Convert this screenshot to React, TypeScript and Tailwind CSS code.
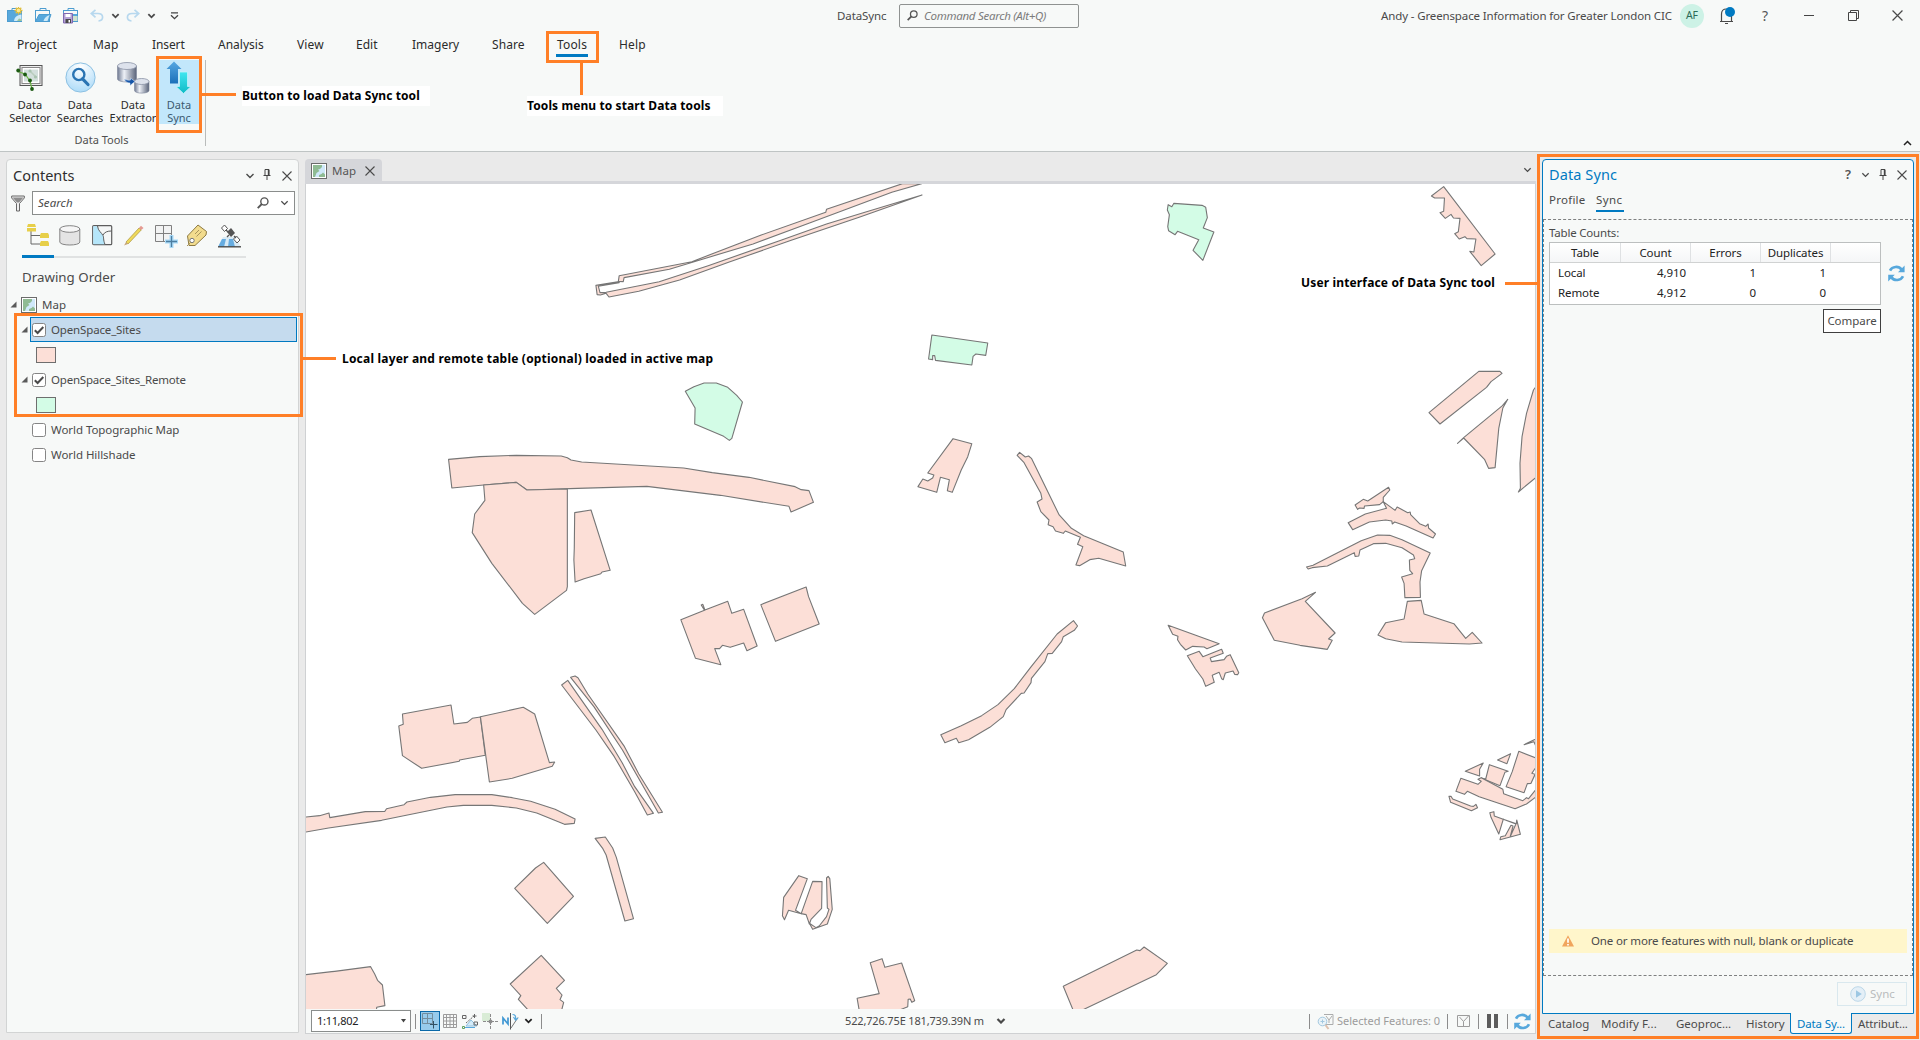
import React from "react";

const FONT = "font-['Noto_Sans','Open_Sans',sans-serif]";

/* ---------- small glyphs ---------- */

function Chevron({ className = "", color = "#4a4a4a", w = 10, sw = 1.4 }: { className?: string; color?: string; w?: number; sw?: number }) {
  return (
    <svg className={`shrink-0 ${className}`} width={w} height={6} viewBox="0 0 10 6" fill="none" stroke={color} strokeWidth={sw}>
      <path d="M1.5 1 5 4.5 8.5 1" />
    </svg>
  );
}

function Cross({ className = "", size = 10 }: { className?: string; size?: number }) {
  return (
    <svg className={`shrink-0 ${className}`} width={size} height={size} viewBox="0 0 10 10" stroke="#4a4a4a" strokeWidth="1.1">
      <path d="M.5.5 9.5 9.5M9.5.5.5 9.5" />
    </svg>
  );
}

function Pin({ className = "" }: { className?: string }) {
  return (
    <svg className={`shrink-0 ${className}`} width="8" height="11" viewBox="0 0 8 11" fill="none" stroke="#444">
      <path d="M2 6V.5h4V6M.5 6.5h7M4 7v4" />
      <path d="M5.5 1v5" strokeWidth="1.4" />
    </svg>
  );
}

function Magnifier({ className = "", size = 13, color = "#555" }: { className?: string; size?: number; color?: string }) {
  return (
    <svg className={`shrink-0 ${className}`} width={size} height={size} viewBox="0 0 13 13" fill="none" stroke={color}>
      <circle cx="8" cy="4.8" r="3.9" strokeWidth="1.5" />
      <path d="M5.2 7.6.8 12" strokeWidth="2" />
    </svg>
  );
}

function Refresh({ className = "" }: { className?: string }) {
  return (
    <svg className={`shrink-0 ${className}`} width="17" height="17" viewBox="0 0 17 17" fill="none" stroke="#57a8dc" strokeWidth="2.6">
      <path d="M2 5.6C4.2 1.2 10.6.6 13.6 4.6" />
      <path d="M15 11.2C12.8 15.8 6.4 16.4 3.4 12.4" />
      <path d="M16.6.6v6.6H10zM.2 16.4V9.8h6.6z" fill="#57a8dc" stroke="none" />
    </svg>
  );
}

function MapIcon({ className = "" }: { className?: string }) {
  return (
    <svg className={`shrink-0 ${className}`} width="16" height="16" viewBox="0 0 16 16">
      <rect x=".5" y=".5" width="15" height="15" fill="#fff" stroke="#6b6b6b" />
      <rect x="2" y="2" width="12" height="12" fill="#cfe8fa" />
      <path d="M2 2h9v2L9 6 7 6.500 8.500 8 5.500 10 4 14H2z" fill="#8fbb93" />
      <path d="M8 14v-2l2.500-1 1.500-1.500 2 2V14z" fill="#8fbb93" />
    </svg>
  );
}

function Expander({ className = "" }: { className?: string }) {
  return (
    <svg className={`shrink-0 ${className}`} width="7" height="7" viewBox="0 0 7 7">
      <path d="M6.500.5v6H.5z" fill="#5a5a5a" />
    </svg>
  );
}

function Check({ on }: { on?: boolean }) {
  return (
    <svg className="shrink-0" width="14" height="14" viewBox="0 0 14 14">
      <rect x=".5" y=".5" width="13" height="13" rx="2" fill="#fff" stroke="#858585" />
      {on && <path d="M2.800 7.200 5.600 10 11.300 4" fill="none" stroke="#4a4a4a" strokeWidth="2" />}
    </svg>
  );
}

/* ---------- title bar ---------- */

function Briefcase({ variant }: { variant: "new" | "open" | "save" }) {
  return (
    <svg className="shrink-0" width="17" height="17" viewBox="0 0 17 17">
      <path d="M5 4V1.500h6V4" fill="none" stroke="#4d9dd0" />
      <rect x=".5" y="3.500" width="14" height="11" fill={variant === "open" ? "#f7f9f8" : "#57a8dc"} stroke="#4d9dd0" />
      {variant === "open" && (
        <>
          <path d="M.5 14.500 4 7.500h12l-2.500 7z" fill="#57a8dc" stroke="#4d9dd0" />
          <path d="M8.500 14c.5-2 2-4.500 6-6l-2 6z" fill="#cfeaf8" />
        </>
      )}
      {variant === "new" && (
        <>
          <path d="M7 14c.5-4 3-6 7.500-6.500V14z" fill="#cfeaf8" />
          <path d="M10 14l2-2.500 2.500 1V14z" fill="#9bc79b" />
          <path d="M11.500-.500v8M7.500 3.500h8M8.700.7l5.600 5.600M14.300.7 8.700 6.300" stroke="#e3c23f" strokeWidth="1.300" />
          <circle cx="11.500" cy="3.500" r="2.300" fill="#fbe98f" stroke="#dcb93a" />
        </>
      )}
      {variant === "save" && (
        <>
          <path d="M1 4h13v3H1z" fill="#f7f9f8" />
          <path d="M10 14V9h4.500v5z" fill="#cfe3cf" />
          <path d="M.5 6.500h9v9.500h-9z" fill="#b5a3d6" stroke="#7f68b0" />
          <path d="M2.500 7h5v3h-5z" fill="#fff" />
          <path d="M2.500 12h5.500v4H2.500z" fill="#4a4a4a" />
          <path d="M5.500 13h1.500v2.500H5.500z" fill="#fff" />
        </>
      )}
    </svg>
  );
}

function Undo({ flip }: { flip?: boolean }) {
  return (
    <svg className={flip ? "shrink-0 -scale-x-100" : "shrink-0"} width="14" height="13" viewBox="0 0 14 13" fill="none" stroke="#b7d8ee" strokeWidth="1.700">
      <path d="M5.500.8 1.200 4.500l4.300 3.800M1.500 4.500H8c6 0 6 7 .5 7.500" />
    </svg>
  );
}

function TitleBar() {
  return (
    <div className="flex h-[31px] items-center text-[11.5px] text-[#4a4a4a]">
      <div className="flex w-[837px] items-center">
        <div className="-mt-px ml-[7px] w-7"><Briefcase variant="new" /></div>
        <div className="-mt-px w-7"><Briefcase variant="open" /></div>
        <div className="-mt-px w-[27px]"><Briefcase variant="save" /></div>
        <Undo />
        <Chevron className="ml-[7px]" w={9} sw={2} />
        <div className="ml-[6px]"><Undo flip /></div>
        <Chevron className="ml-[7px]" w={9} sw={2} />
        <svg className="ml-[14px]" width="9" height="8" viewBox="0 0 9 8" fill="none" stroke="#444" strokeWidth="1.300">
          <path d="M1 .8h7M1 3.200 4.500 6.700 8 3.200" />
        </svg>
      </div>
      <div className="w-[62px] tracking-[-0.1px]">DataSync</div>
      <div className="flex h-[24px] w-[180px] items-center rounded-[2px] border border-[#8f9291] pl-[7px] text-[#7c7c7c]">
        <Magnifier size={11} />
        <span className="ml-[6px] whitespace-nowrap italic tracking-[-0.28px]">Command Search (Alt+Q)</span>
      </div>
      <div className="ml-[302px] w-[299px] whitespace-nowrap tracking-[-0.13px]">Andy - Greenspace Information for Greater London CIC</div>
      <div className="flex size-6 items-center justify-center rounded-full bg-[#cdf2e6] text-[10.5px] text-[#2c6b57]">AF</div>
      <svg className="ml-[16px]" width="17" height="19" viewBox="0 0 17 19" fill="none" stroke="#4a4a4a" strokeWidth="1.200">
        <path d="M0 15.500h13M1.500 15V8C1.500 4.500 3.500 3 6.500 3s5 1.500 5 5v7M5 17.500h3" />
        <circle cx="10" cy="6" r="5" fill="#007ac2" stroke="none" />
      </svg>
      <div className="ml-[25px] w-[42px] text-[14px] text-[#555]">?</div>
      <svg width="10" height="10" viewBox="0 0 10 10" stroke="#444"><path d="M0 4.500h10" /></svg>
      <svg className="ml-[34px]" width="11" height="11" viewBox="0 0 11 11" fill="none" stroke="#444"><path d="M.5 2.500h8v8h-8zM2.500 2.500v-2h8v8h-2" /></svg>
      <Cross className="ml-[33px]" size={11} />
    </div>
  );
}

/* ---------- ribbon ---------- */

function RibbonTabs() {
  return (
    <div className="flex h-[27px] items-center pl-[17px] text-[12px] text-[#2b2b2b]">
      <div className="w-[76px] tracking-[0.1px]">Project</div>
      <div className="w-[59px] tracking-[0.2px]">Map</div>
      <div className="w-[66px] tracking-[-0.1px]">Insert</div>
      <div className="w-[79px]">Analysis</div>
      <div className="w-[59px] tracking-[0.15px]">View</div>
      <div className="w-[56px]">Edit</div>
      <div className="w-[80px]">Imagery</div>
      <div className="w-[64px] tracking-[0.1px]">Share</div>
      <div className="relative mr-[31px] w-8 text-center tracking-[0.2px]">
        Tools
        <span className="absolute -bottom-[3px] left-0 h-[3px] w-8 bg-[#007ac2]" />
      </div>
      <div className="tracking-[0.2px]">Help</div>
    </div>
  );
}

function SelectorIcon() {
  return (
    <svg width="28" height="28" viewBox="0 0 28 28">
      <rect x="4" y="1.500" width="22" height="20" fill="#ececec" stroke="#555" />
      <rect x="6" y="3.500" width="18" height="16" fill="#fff" stroke="#888" />
      <rect x="8" y="5.500" width="14" height="12" fill="#d3dfdc" />
      <path d="M2 7.500 9 10l5 7 2 8" fill="none" stroke="#6bb545" strokeWidth="1.200" />
      <path d="M14 7l6 6" stroke="#b9cdbd" strokeWidth="1.500" />
      <g fill="#1c5a12"><circle cx="2.200" cy="6.500" r="1.900" /><circle cx="9" cy="10.500" r="1.900" /><circle cx="14" cy="16.500" r="1.900" /><circle cx="16" cy="25" r="1.900" /></g>
      <g fill="#a9c4b0"><circle cx="14" cy="7" r="1.600" /><circle cx="19.500" cy="13" r="1.600" /></g>
    </svg>
  );
}

function SearchesIcon() {
  return (
    <svg width="31" height="31" viewBox="0 0 31 31">
      <defs>
        <radialGradient id="lens" cx=".5" cy=".15" r=".9"><stop offset="0" stopColor="#fff" /><stop offset=".6" stopColor="#cbe8fb" /><stop offset="1" stopColor="#a9daf8" /></radialGradient>
      </defs>
      <circle cx="15.500" cy="15.500" r="14.600" fill="url(#lens)" stroke="#8cc0e2" />
      <circle cx="13.800" cy="12.500" r="5.600" fill="none" stroke="#2a74b3" strokeWidth="2.400" />
      <path d="M17.600 16.800 23 22.500" stroke="#2a74b3" strokeWidth="3.200" strokeLinecap="round" />
    </svg>
  );
}

function ExtractorIcon() {
  return (
    <svg width="33" height="32" viewBox="0 0 33 32">
      <defs>
        <linearGradient id="steel"><stop offset="0" stopColor="#6d7890" /><stop offset=".35" stopColor="#eef1f7" /><stop offset="1" stopColor="#596379" /></linearGradient>
      </defs>
      <path d="M.5 4v13c0 4 19 4 19 0V4z" fill="url(#steel)" stroke="#7d869a" strokeWidth=".6" />
      <ellipse cx="10" cy="4" rx="9.500" ry="3.500" fill="#dde2ec" stroke="#8a93a6" strokeWidth=".8" />
      <path d="M17.500 19.500v9c0 3.500 14.500 3.500 14.500 0v-9z" fill="url(#steel)" stroke="#7d869a" strokeWidth=".6" />
      <ellipse cx="24.700" cy="19.500" rx="7.300" ry="3" fill="#dde2ec" stroke="#8a93a6" strokeWidth=".8" />
      <path d="M7 17c1.500 3 4 4 6 4v2.500l5-4-4.500-3.500v2C11 18.500 9.500 18 7 17z" fill="#1656a8" stroke="#e5edf8" strokeWidth=".5" />
    </svg>
  );
}

function SyncIcon() {
  return (
    <svg width="26" height="33" viewBox="0 0 26 33">
      <defs>
        <linearGradient id="up" x2="0" y2="1"><stop offset="0" stopColor="#55a7e2" /><stop offset="1" stopColor="#1c70b9" /></linearGradient>
        <linearGradient id="down" x2="0" y2="1"><stop offset="0" stopColor="#41e6f0" /><stop offset="1" stopColor="#10bac6" /></linearGradient>
      </defs>
      <path d="M8 .5 15.500 8h-3.500v14.500H4V8H.5z" fill="url(#up)" />
      <path d="M13.500 11H21.500v14.500H25L17.500 32.500 10 25.500h3.500z" fill="url(#down)" stroke="#c2f4fa" strokeWidth=".8" />
    </svg>
  );
}

function RibbonButton({ icon, a, b, width, className = "" }: { icon: React.ReactNode; a: string; b: string; width: string; className?: string }) {
  return (
    <div className={`flex shrink-0 flex-col items-center text-[11px] leading-[13px] ${width} ${className}`}>
      <div className="mb-[3px] flex h-[35px] items-center justify-center">{icon}</div>
      <div>{a}</div>
      <div>{b}</div>
    </div>
  );
}

function Ribbon() {
  return (
    <div className="flex h-[93px] text-[#2b2b2b]">
      <div className="mt-[2px] mb-[5px] flex w-[206px] flex-col border-r border-[#b9bcbb]">
        <div className="flex h-[71px]">
          <RibbonButton icon={<SelectorIcon />} a="Data" b="Selector" width="w-[60px]" />
          <RibbonButton icon={<SearchesIcon />} a="Data" b="Searches" width="w-[40px]" />
          <RibbonButton icon={<ExtractorIcon />} a="Data" b="Extractor" width="w-[58px]" className="pl-[8px]" />
          <RibbonButton icon={<SyncIcon />} a="Data" b="Sync" width="w-[40px]" className="ml-px bg-[#c2e7fb] text-[#3c5a70]" />
        </div>
        <div className="mt-[4px] pt-[4px] pr-[2px] text-center text-[11px] leading-[16px] text-[#4f4f4f]">Data Tools</div>
      </div>
      <div className="flex flex-1 items-end justify-end pr-[7px] pb-[5px]">
        <Chevron className="rotate-180" color="#222" w={11} sw={1.5} />
      </div>
    </div>
  );
}

/* ---------- contents pane ---------- */

function ContentsTools() {
  return (
    <div className="mt-[8px] ml-[15px] w-[224px]">
      <div className="flex h-[25px] items-center">
        <svg className="ml-[5px]" width="23" height="23" viewBox="0 0 23 23">
          <path d="M4 7v13h11M4 11.500h11" fill="none" stroke="#666" />
          <path d="M1 0h7l1 3H0zM0 4h9v3.500H0zM14 9h7l1 2v3h-9v-3zM14 17h7l1 2v3h-9v-3z" fill="#e7cf49" />
        </svg>
        <svg className="ml-[9px]" width="22" height="21" viewBox="0 0 22 21" stroke="#858585">
          <path d="M.8 4v13c0 4 20 4 20 0V4z" fill="#e4e4e4" />
          <ellipse cx="10.800" cy="4" rx="10" ry="3.300" fill="#f6f6f6" />
        </svg>
        <svg className="ml-[11px]" width="21" height="21" viewBox="0 0 21 21" stroke="#5d5d5d">
          <rect x=".7" y=".7" width="19" height="19" rx="1" fill="#f4f6f6" strokeWidth="1.200" />
          <path d="M1.200 1.200h4.300c.5 5 4 6.500 5.500 9 1 2 0 4 2 9H1.200z" fill="#b5e6fa" stroke="none" />
          <path d="M5.500 1c.5 5 4 6.500 5.500 9.500 1 2 0 4 2 9M11 10c1.500-3 4.500-4 8.500-4" fill="none" />
        </svg>
        <svg className="ml-[10px]" width="21" height="21" viewBox="0 0 21 21">
          <path d="M3 17 16 3l2.200 2L5 19z" fill="#efd95a" stroke="#a8923a" strokeWidth=".7" />
          <path d="M3 17l2 2-4 1.500z" fill="#c7a77a" />
          <path d="M16 3l2-2.200L20.500 3l-2.300 2z" fill="#e59a92" />
        </svg>
        <svg className="ml-[10px]" width="24" height="24" viewBox="0 0 24 24">
          <path d="M1.500 1.500h16v16h-16zM9.500 1.500v16M1.500 9.500h16" fill="#f2f3f3" stroke="#808080" />
          <path d="M17.500 11v13M11 17.500h13" stroke="#a8daf7" strokeWidth="4" />
          <path d="M17.500 12v11M12 17.500h11" stroke="#4c7ea0" strokeWidth="1.300" />
        </svg>
        <svg className="ml-[8px]" width="22" height="23" viewBox="0 0 22 23">
          <path d="M1.500 12 12 1l8.500 6.500L20 11 9 21.500H3z" fill="#f2dc8e" stroke="#8d7a42" />
          <circle cx="6" cy="16.500" r="2.200" fill="#fff" stroke="#777" />
          <path d="M9 10l4-4M10.500 12.500l5-5M5 18l-4 4" stroke="#a8955c" />
        </svg>
        <svg className="ml-[9px]" width="25" height="24" viewBox="0 0 25 24">
          <path d="M6 13h12l6 10H1z" fill="#d8eaf5" />
          <path d="M5 15l-4 8h6l2-8zM12 15l-1 8h7l-2-8z" fill="#66ace0" />
          <path d="M1 22.800h23" stroke="#4d4d4d" strokeWidth="1.400" />
          <path d="M10 8l4-4 4 5-4 4z" fill="#555" />
          <g fill="#fff" stroke="#555"><path d="M4.500 4 7.500 1l3 3.500-3 3zM16.500 15l3-3 3.500 4-3 3z" /></g>
          <path d="M9 6l2 2M17 12l2 2M12 11l-2 2" stroke="#555" strokeWidth="1.300" />
        </svg>
      </div>
      <div className="mt-[7px] flex h-[3px] items-end">
        <div className="h-[3px] w-8 bg-[#007ac2]" />
        <div className="h-[2px] flex-1 bg-[#e0e2e2]" />
      </div>
    </div>
  );
}

function Contents() {
  return (
    <div className="ml-[6px] flex h-[874px] w-[293px] shrink-0 flex-col rounded-t-[4px] border border-[#d2d4d4] bg-[#f7f9f8] text-[11.5px] text-[#4a4a4a]">
      <div className="flex h-[31px] items-center pl-[6px]">
        <div className="w-[232px] text-[14.5px] text-[#2e2e2e]">Contents</div>
        <Chevron w={10} />
        <Pin className="-mt-[2px] ml-[8px]" />
        <Cross className="ml-[11px]" />
      </div>
      <div className="flex items-center">
        <svg className="ml-[4px]" width="14" height="17" viewBox="0 0 14 17">
          <path d="M.7 1h12.600v2L8.500 8.500V16H5.500V8.500L.7 3z" fill="#f0f0f0" stroke="#666" />
          <path d="M1.500 2.500h11L8 7.500H6z" fill="#8d8d8d" />
        </svg>
        <div className="ml-[7px] flex h-[24px] w-[263px] items-center border border-[#8a8d8c] bg-white pl-[5px] italic">
          <span className="w-[219px] tracking-[0.05px]">Search</span>
          <Magnifier size={12} />
          <Chevron className="ml-[11px]" w={9} />
        </div>
      </div>
      <ContentsTools />
      <div className="mt-[10px] pl-[15px] text-[13.3px] leading-[19px] tracking-[0.02px]">Drawing Order</div>
      <div className="mt-[5px]">
        <div className="flex h-[25px] items-center pl-[3px]">
          <Expander /><MapIcon className="mr-[5px] ml-[4px]" />Map
        </div>
        <div className="flex h-[25px] items-center pl-[14px] tracking-[-0.15px]">
          <Expander />
          <div className="ml-[2px] flex h-[25px] w-[267px] items-center gap-[5px] border border-[#0079c1] bg-[#c5dbee] pl-px">
            <Check on /><span>OpenSpace_Sites</span>
          </div>
        </div>
        <div className="flex h-[25px] items-center pl-[29px]"><div className="h-[16px] w-[20px] border border-[#6e6e6e] bg-[#fcdfd7]" /></div>
        <div className="flex h-[25px] items-center pl-[14px] tracking-[-0.2px]">
          <Expander className="mr-[4px]" /><Check on /><span className="ml-[5px]">OpenSpace_Sites_Remote</span>
        </div>
        <div className="flex h-[25px] items-center pl-[29px]"><div className="h-[16px] w-[20px] border border-[#6e6e6e] bg-[#d3fce6]" /></div>
        <div className="flex h-[25px] items-center gap-[5px] pl-[25px] tracking-[-0.05px]"><Check /><span>World Topographic Map</span></div>
        <div className="flex h-[25px] items-center gap-[5px] pl-[25px] tracking-[-0.05px]"><Check /><span>World Hillshade</span></div>
      </div>
    </div>
  );
}

/* ---------- map features ---------- */

const NW = [
  "1476,11 1290,88 1288,97 1130,165 960,245 782,287 780,304 792,305 794,293 905,268 990,236 1110,192 1250,128 1450,37 1523,11",
  "782,305 725,316 728,344 736,345 750,340 752,343 757,351 830,334 930,300 1050,247 1200,182 1370,112 1524,45 1380,98 1290,132 1180,180 1000,257 880,305 750,337 735,338 731,319 782,308",
  "364,838 440,830 530,826 640,828 655,833 664,840 690,846 940,864 1010,878 1100,892 1213,920 1228,929 1247,932 1258,967 1203,996 1198,979 1030,946 850,919 680,925 556,930 530,907 450,915 372,924",
  "450,915 530,907 556,930 655,927 655,1220 653,1231 575,1303 545,1270 470,1150 422,1058 428,1002 453,961",
  "673,998 713,990 760,1171 740,1176 737,1181 696,1196 674,1206 671,1140 672,1104",
];
const NW_GREEN = ["944,634 965,620 990,609 1020,609 1048,622 1070,646 1084,666 1058,775 1052,781 1038,769 967,732 968,684"];

const NE = [
  "1302,48 1332,20 1458,222 1424,257 1396,214 1406,216 1411,177 1389,176 1384,170 1370,177 1359,161 1368,155 1372,115 1356,114 1350,103 1336,115 1323,98 1332,94 1334,54 1310,54",
  "1418,574 1470,574 1475,580 1448,605 1437,622 1323,732 1296,698",
  "1366,790 1381,773 1476,677 1489,658 1477,684 1467,745 1458,863 1442,865 1432,838 1381,774",
  "1570,600 1552,630 1535,700 1524,770 1519,850 1520,925 1515,936 1570,880",
  "130,776 176,791 166,830 150,870 128,937 116,932 121,899 99,892 90,937 44,920 56,897 68,903 80,894 83,885 68,879",
  "287,826 293,817 307,831 315,828 322,835 390,1005 420,1045 450,1067 547,1116 553,1158 487,1135 465,1139 440,1157 431,1155 448,1100 435,1093 442,1072 405,1053 400,1060 381,1053 375,1040 363,1034 365,1020 345,995 336,966 348,957 345,940 304,848",
  "1115,975 1135,958 1146,963 1197,922 1200,930 1184,952 1184,965 1175,974 1138,978 1137,985 1126,984 1121,988",
  "1184,965 1192,985 1140,1002 1098,1028 1109,1049 1150,1026 1190,1020 1205,1023 1206,1032 1212,1026 1240,1038 1306,1074 1312,1062 1295,1044 1294,1032 1288,1039 1273,1031 1251,1004 1250,996 1244,998 1218,981 1213,991",
  "996,1161 1012,1156 1130,1082 1170,1065 1200,1066 1230,1079 1299,1119 1278,1172 1274,1206 1275,1252 1237,1253 1235,1210 1229,1191 1256,1181 1249,1171 1248,1140 1261,1136 1258,1125 1230,1103 1190,1090 1160,1091 1127,1110 1124,1128 1115,1129 1113,1118 1047,1158 1010,1163 1000,1167",
];
const NE_GREEN = [
  "657,74 666,80 671,70 740,76 749,82 753,113 743,144 769,156 742,241 718,211 732,179 680,154 674,164 658,152 656,140 660,104 655,90",
  "78,465 215,489 210,526 186,522 179,529 176,555 87,541 85,527 80,527 80,539 70,537",
];

const SW = [
  "933,149 991,121 983,105 987,103 992,120 1048,94 1058,130 1087,118 1120,228 1095,242 1087,219 1054,232 1035,226 1028,236 1016,236 1031,284 969,265",
  "1129,104 1240,51 1246,80 1272,162 1165,214",
  "641,345 656,331 740,478 790,580 820,650 866,730 851,735 820,665 770,560 725,480",
  "663,322 674,318 681,323 705,372 795,530 830,612 888,727 878,729 860,690 790,540 720,410",
  "251,432 370,405 377,462 410,457 422,445 442,441 454,556 391,570 390,574 298,595 251,557 242,468 253,463",
  "442,440 547,412 575,432 611,578 624,576 618,589 520,625 464,636",
  "0,743 48,737 71,729 73,743 160,725 208,724 212,716 255,704 262,696 320,682 380,674 470,674 520,683 565,694 625,718 674,747 672,760 648,763 580,729 530,714 470,706 400,706 360,711 200,751 70,774 0,789",
  "723,805 748,801 766,834 775,862 817,1046 796,1053 750,855 742,836",
  "597,877 670,979 606,1060 526,955 577,894",
  "591,1156 648,1231 628,1255 642,1275 637,1289 646,1297 638,1335 570,1335 535,1288 541,1277 515,1242",
  "0,1216 78,1205 85,1204 173,1190 183,1212 190,1231 202,1245 208,1307 188,1312 186,1335 0,1335",
  "1222,917 1243,926 1214,1021 1228,1031 1197,1021 1187,1049 1182,1037 1185,982",
  "1256,934 1279,935 1278,1015 1252,1048 1248,1062 1240,1034 1228,1031",
  "1290,924 1294,919 1298,926 1304,1018 1292,1062 1256,1078 1248,1060 1264,1073 1272,1068 1290,1040 1296,1018 1292,1014",
  "1397,1178 1426,1166 1433,1192 1474,1179 1506,1292 1499,1297 1495,1287 1490,1288 1489,1310 1440,1335 1372,1335 1365,1285 1419,1271",
];

const SE = [
  "425,152 435,168 427,181 400,200 396,215 373,250 362,251 355,275 322,325 321,338 304,369 297,370 260,419 253,440 220,472 168,509 144,518 138,505 110,518 100,494 150,467 200,437 240,404 280,356 320,292 385,192",
  "657,166 782,221 752,236 745,231 717,229 700,240 687,223 680,209 681,199 668,193",
  "704,257 733,244 742,260 788,238 792,250 760,264 763,275 794,269 800,259 809,254 830,308 827,314 820,313 816,303 797,309 792,329 788,326 782,307 765,316 770,337 749,349 742,327 724,297",
  "893,129 985,86 1018,67 993,94 1066,189 1050,207 1059,211 1047,238 980,226 917,211 888,143",
  "1243,94 1277,91 1284,132 1357,161 1386,205 1402,187 1426,219 1395,222 1230,216 1190,206 1171,195 1190,158 1235,147",
  "1529,524 1570,500 1570,560 1553,515",
  "1516,544 1570,570 1548,610 1556,613 1546,640 1537,641 1529,668 1485,650 1500,605",
  "1464,570 1496,551 1487,581",
  "1385,604 1429,579 1420,598 1420,618",
  "1444,584 1490,604 1482,607 1470,647 1424,624 1435,627",
  "1374,625 1416,643 1424,634 1416,628 1424,623 1477,658 1479,671 1526,692 1535,683 1540,686 1570,640 1570,670 1535,702 1507,716 1419,680 1390,664 1383,673 1362,664",
  "1345,679 1350,679 1354,687 1398,708 1405,709 1411,703 1415,713 1400,722 1349,697",
  "1445,728 1455,725 1456,738 1478,748 1467,792 1448,742",
  "1478,748 1510,761 1511,750 1520,793 1470,809 1472,800 1483,797 1497,766 1502,768 1495,800 1509,762",
  "400,1249 580,1140 588,1142 598,1131 655,1180 628,1214 430,1330 424,1320",
];

function Quadrant({ points, fill, transform }: { points: string[]; fill: string; transform: string }) {
  return (
    <g transform={transform} fill={fill}>
      {points.map((p) => (
        <polygon key={p} points={p} vectorEffect="non-scaling-stroke" />
      ))}
    </g>
  );
}

function MapCanvas() {
  const pink = "#fcdfd7";
  const green = "#d3fce6";
  return (
    <svg className="block shrink-0 bg-white" width="1229" height="825" viewBox="0 0 1229 825" stroke="#767676" strokeWidth="1.1" strokeLinejoin="round">
      <Quadrant points={NW} fill={pink} transform="translate(-6 -4) scale(.40816 .33333)" />
      <Quadrant points={NW_GREEN} fill={green} transform="translate(-6 -4) scale(.40816 .33333)" />
      <Quadrant points={NE} fill={pink} transform="translate(594 -4) scale(.40816 .33333)" />
      <Quadrant points={NE_GREEN} fill={green} transform="translate(594 -4) scale(.40816 .33333)" />
      <Quadrant points={SW} fill={pink} transform="translate(-6 386) scale(.40816 .33333)" />
      <Quadrant points={SE} fill={pink} transform="translate(594 386) scale(.40816 .33333)" />
    </svg>
  );
}

function Sep({ className = "" }: { className?: string }) {
  return <div className={`h-[15px] w-px shrink-0 bg-[#8c8c8c] ${className}`} />;
}

function StatusBar() {
  return (
    <div className="flex h-6 items-center bg-[#f7f9f8] text-[11px] text-[#4a4a4a]">
      <div className="ml-[5px] flex h-[22px] w-[100px] shrink-0 items-center border border-[#8a8d8c] bg-white pl-[5px] tracking-[-0.3px] text-[#222]">
        <span className="w-[84px]">1:11,802</span>
        <svg width="5" height="4" viewBox="0 0 5 4"><path d="M0 0h5L2.500 3.500z" fill="#444" /></svg>
      </div>
      <Sep className="ml-[4px]" />
      <div className="ml-[4px] flex h-5 w-5 items-center justify-center border border-[#0a68a8] bg-[#97cbec]">
        <svg width="16" height="16" viewBox="0 0 16 16" fill="none" stroke="#738d9e"><path d="M.5.5h10v10H.5zM5.500.5v10M.5 5.500h10" /><path d="M11.500 8v7.500M8 11.500h7.500" stroke="#2f4f63" /></svg>
      </div>
      <svg className="ml-[3px]" width="14" height="14" viewBox="0 0 14 14" fill="none" stroke="#9c9c9c"><path d="M.5.5h13v13H.5zM3.500 0v14M7 0v14M10.500 0v14M0 3.500h14M0 7h14M0 10.500h14" /></svg>
      <svg className="ml-[5px]" width="17" height="15" viewBox="0 0 17 15" fill="none" stroke="#666">
        <path d="M4 12 9 6l6 6z" fill="#d4ecf9" stroke="#8fc0de" /><path d="M.5 1.500h3.500v3H.5zM12 8h3.500v3H12z" /><path d="M4 9l8-7" strokeDasharray="2 1" /><path d="M12.500 0v4M10.500 2h4" /><path d="M3 13.500h10" stroke="#57a8dc" /><path d="M.5 12.500h2v2h-2z" stroke="#5fa05f" />
      </svg>
      <svg className="ml-[3px]" width="17" height="17" viewBox="0 0 17 17"><path d="M0 0h8v8H0z" fill="#d9ecd6" /><path d="M8.500 1v15M1 8.500h15" stroke="#8c8c8c" strokeDasharray="3 1" /><circle cx="8.500" cy="8.500" r="2" fill="#8c8c8c" /></svg>
      <svg className="ml-[3px]" width="17" height="17" viewBox="0 0 17 17" fill="none"><path d="M1 11.500v-6.500l5 6v-6.500" stroke="#3f97d3" strokeWidth="1.700" /><path d="M8.500 0v16.500" stroke="#555" /><path d="M9 15 16 4.500" stroke="#777" /><path d="M10.500 1.500c2.500 0 3.500 1.500 3 5M11.500 4l2 3 2.500-2" stroke="#57a8dc" strokeWidth="1.200" /></svg>
      <Chevron className="ml-[5px]" color="#222" w={9} sw={2} />
      <Sep className="ml-[8px]" />
      <div className="ml-[303px] w-[151px] whitespace-nowrap tracking-[-0.16px]">522,726.75E 181,739.39N m</div>
      <Chevron w={10} sw={2.2} />
      <Sep className="ml-[303px]" />
      <svg className="ml-[7px] shrink-0 opacity-70" width="17" height="17" viewBox="0 0 17 17" fill="none" stroke="#8c8c8c"><path d="M7 1.500h9v10H7M9 3l3 4 3-4M12 7v3" /><circle cx="5.500" cy="8.500" r="4.300" fill="#e5f1f8" stroke="#7fb4d6" /><path d="M3.500 8.500h4M5.500 6.500v4" stroke="#7fb4d6" /><path d="M8.500 12l3 4" stroke="#d3a98f" strokeWidth="2" /></svg>
      <div className="ml-[3px] w-[110px] whitespace-nowrap text-[11px] text-[#9c9c9c]">Selected Features: 0</div>
      <Sep />
      <svg className="ml-[9px]" width="13" height="12" viewBox="0 0 13 12" fill="none" stroke="#9c9c9c"><path d="M.5.5h12v11H.5zM2.500 2l4 4.500 5-5.500M6.500 6.500v5" /></svg>
      <Sep className="ml-[8px]" />
      <div className="ml-[8px] flex h-[14px] w-[11px] justify-between"><span className="w-1 bg-[#5c5c5c]" /><span className="w-1 bg-[#5c5c5c]" /></div>
      <Sep className="ml-[9px]" />
      <Refresh className="ml-[6px]" />
    </div>
  );
}

function MapView() {
  return (
    <div className="ml-[6px] h-[874px] w-[1231px] shrink-0">
      <div className="flex h-[22px] items-end">
        <div className="flex h-[22px] w-[77px] items-center rounded-t-[4px] bg-[#d5d6da] pt-[2px] pl-[6px] text-[11.5px] text-[#555]">
          <MapIcon /><span className="ml-[5px] w-[33px]">Map</span><Cross />
        </div>
        <div className="flex h-[22px] flex-1 items-center justify-end pr-[4px]"><Chevron w={9} /></div>
      </div>
      <div className="h-[3px] bg-[#d5d6da]" />
      <div className="h-[850px] border border-t-0 border-[#cfd1d3]">
        <MapCanvas />
        <StatusBar />
      </div>
    </div>
  );
}

/* ---------- data sync pane ---------- */

const rows = [
  ["Local", "4,910", "1", "1"],
  ["Remote", "4,912", "0", "0"],
];

function CountsTable() {
  return (
    <div className="h-[63px] w-[332px] border border-[#bcbfbf] bg-white tracking-[-0.1px] text-[#222]">
      <div className="grid h-[20px] grid-cols-[71px_70px_70px_70px_1fr] border-b border-[#d0d2d2] bg-linear-to-b from-white to-[#f5f6f7] text-center leading-[19px]">
        {["Table", "Count", "Errors", "Duplicates", ""].map((h) => (
          <div key={h} className="border-r border-[#dfe1e3] last:border-r-0">{h}</div>
        ))}
      </div>
      {rows.map((r) => (
        <div key={r[0]} className="grid h-[20px] grid-cols-[71px_65px_70px_70px] leading-[20px]">
          <div className="pl-[8px]">{r[0]}</div>
          <div className="text-right">{r[1]}</div>
          <div className="text-right">{r[2]}</div>
          <div className="text-right">{r[3]}</div>
        </div>
      ))}
    </div>
  );
}

function DataSyncPane() {
  return (
    <div className="ml-[6px] w-[372px] shrink-0 text-[11.5px] text-[#4a4a4a]">
      <div className="flex h-[855px] flex-col rounded-t-[4px] border border-[#007ac2] bg-[#f7f9f8]">
        <div className="flex h-[29px] items-center pt-[1px] pl-[6px]">
          <div className="w-[296px] text-[14.5px] tracking-[0.1px] text-[#007ac2]">Data Sync</div>
          <span className="w-[16px] text-[13px] font-semibold text-[#555]">?</span>
          <Chevron w={9} />
          <Pin className="-mt-[2px] ml-[9px]" />
          <Cross className="ml-[10px]" />
        </div>
        <div className="flex h-[24px] pl-[6px] leading-[22px]">
          <div className="w-[47px] tracking-[0.25px]">Profile</div>
          <div className="relative h-[23px] w-[29px] tracking-[0.4px]">Sync<span className="absolute bottom-0 left-0 h-[2px] w-[28px] bg-[#007ac2]" /></div>
        </div>
        <div className="mt-[6px] flex h-[757px] flex-col border border-dashed border-[#7e8080] pl-[5px]">
          <div className="mt-[4px] h-[18px] leading-[17px] tracking-[-0.2px]">Table Counts:</div>
          <div className="flex items-center">
            <CountsTable />
            <Refresh className="ml-[7px]" />
          </div>
          <div className="mt-[4px] flex w-[332px] justify-end">
            <div className="h-[24px] w-[58px] border border-[#3f3f3f] bg-white text-center leading-[22px] tracking-[-0.05px]">Compare</div>
          </div>
          <div className="mt-auto mb-[22px] flex h-[24px] w-[358px] items-center bg-[#fff6cb]">
            <svg className="mr-[17px] ml-[13px]" width="12" height="12" viewBox="0 0 12 12"><path d="M6 .3 12 11.500H0z" fill="#f0a55d" /><path d="M6 3.500v4.300M6 9v1.600" stroke="#fff" strokeWidth="1.700" /></svg>
            <span className="tracking-[-0.14px]">One or more features with null, blank or duplicate</span>
          </div>
        </div>
        <div className="flex justify-end pt-[6px] pr-[6px]">
          <div className="flex h-[24px] w-[70px] items-center border border-[#d9e8ee] pl-[12px] text-[#b9bcbd]">
            <svg width="16" height="16" viewBox="0 0 16 16"><circle cx="8" cy="8" r="7.300" fill="#e4eff7" stroke="#bcd7e8" /><path d="M6 4.200v7.600L11.800 8z" fill="#9cc7e3" /></svg>
            <span className="ml-[4px]">Sync</span>
          </div>
        </div>
      </div>
      <div className="flex h-[21px] leading-[20px]">
        <div className="w-[53px] pl-[6px]">Catalog</div>
        <div className="w-[75px] pl-[6px] tracking-[0.1px]">Modify F...</div>
        <div className="w-[70px] pl-[6px]">Geoproc...</div>
        <div className="w-[50px] pl-[6px]">History</div>
        <div className="-mt-px h-[21px] w-[62px] rounded-b-[3px] border border-t-0 border-[#007ac2] bg-[#f7f9f8] text-center leading-[22px] tracking-[-0.15px] text-[#007ac2]">Data Sy...</div>
        <div className="pl-[6px] tracking-[-0.1px]">Attribut...</div>
      </div>
    </div>
  );
}

/* ---------- callouts over the window ---------- */

function Callouts() {
  const label = "absolute whitespace-nowrap bg-white text-[12px] font-bold leading-[20px] text-black";
  return (
    <div className="pointer-events-none absolute inset-0">
      <div className="absolute top-[56px] left-[156px] h-[77px] w-[46px] border-[3px] border-[#ff7f27]" />
      <div className="absolute top-[93px] left-[202px] h-[3px] w-[34px] bg-[#ff7f27]" />
      <div className={`${label} top-[86px] left-[242px] w-[188px] tracking-[0.09px]`}>Button to load Data Sync tool</div>

      <div className="absolute top-[31px] left-[546px] h-[32px] w-[53px] border-[3px] border-[#ff7f27]" />
      <div className="absolute top-[63px] left-[580px] h-[32px] w-[3px] bg-[#ff7f27]" />
      <div className={`${label} top-[96px] left-[527px] w-[196px] tracking-[0.1px]`}>Tools menu to start Data tools</div>

      <div className="absolute top-[313px] left-[14px] h-[104px] w-[289px] border-[3px] border-[#ff7f27]" />
      <div className="absolute top-[357px] left-[303px] h-[3px] w-[33px] bg-[#ff7f27]" />
      <div className={`${label} top-[349px] left-[342px] tracking-[0.2px]`}>Local layer and remote table (optional) loaded in active map</div>

      <div className="absolute top-[154px] left-[1537px] h-[885px] w-[382px] border-[3px] border-[#ff7f27]" />
      <div className="absolute top-[282px] left-[1505px] h-[3px] w-[32px] bg-[#ff7f27]" />
      <div className={`${label} top-[273px] left-[1301px] tracking-[0.15px]`}>User interface of Data Sync tool</div>
    </div>
  );
}

export default function App() {
  return (
    <div className={`relative flex h-[1040px] w-[1920px] flex-col overflow-hidden bg-[#eaeaea] ${FONT}`}>
      <header className="h-[152px] shrink-0 border-b border-[#bfc4c4] bg-[#f7f9f8]">
        <TitleBar />
        <RibbonTabs />
        <Ribbon />
      </header>
      <main className="flex flex-1 pt-[7px]">
        <Contents />
        <MapView />
        <DataSyncPane />
      </main>
      <Callouts />
    </div>
  );
}
